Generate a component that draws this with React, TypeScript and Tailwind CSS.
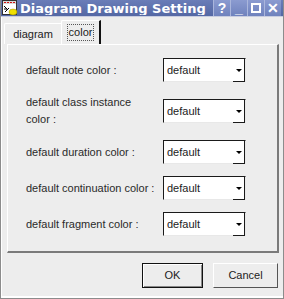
import React from 'react';

const rows = [
  'default note color :',
  'default class instance color :',
  'default duration color :',
  'default continuation color :',
  'default fragment color :',
];

function AppIcon() {
  return (
    <svg width="16" height="16" viewBox="0 0 16 16">
      <rect x="0.5" y="0.5" width="14" height="14" fill="#fff" stroke="#333" />
      <rect x="1" y="1" width="13" height="3" fill="#d8d8d8" />
      <rect x="2" y="2" width="2" height="1" fill="#d01010" />
      <rect x="5" y="2" width="2" height="1" fill="#d01010" />
      <rect x="8" y="2" width="2" height="1" fill="#d01010" />
      <rect x="11" y="2" width="2" height="1" fill="#d01010" />
      <path d="M2 6 L6 10 M2 9 L5 9 M3 12 L7 8" stroke="#000" strokeWidth="1" />
      <ellipse cx="11" cy="12" rx="4" ry="3" fill="#f0e000" stroke="#a09000" strokeWidth="0.5" />
    </svg>
  );
}

function TitleButton({ children }: { children: React.ReactNode }) {
  return (
    <div className="w-[17px] h-[16px] flex items-center justify-center border-l border-[#aab6dc] bg-gradient-to-b from-[#8b9bd0] to-[#6f82bd] text-white font-bold text-[14px] leading-none">
      {children}
    </div>
  );
}

function Combo() {
  return (
    <div className="w-[83px] h-[24px] flex bg-white border-t border-l border-t-[#1a1a1a] border-l-[#1a1a1a] border-r border-b border-r-[#e8e8e8] border-b-[#e8e8e8]">
      <div className="flex-1 flex items-center pl-[3px] text-[11px] text-[#222]">default</div>
      <div className="w-[12px] h-[23px] flex items-center justify-center border-r border-b border-[#1a1a1a]">
        <div className="w-0 h-0 border-l-[3px] border-r-[3px] border-t-[3px] border-l-transparent border-r-transparent border-t-black" />
      </div>
    </div>
  );
}

export default function App() {
  return (
    <div
      className="w-[284px] h-[299px] flex flex-col bg-[#ededed] border-l border-r border-b border-[#8c8c8c] overflow-hidden"
      style={{ fontFamily: '"Liberation Sans", Arial, sans-serif' }}
    >
      {/* title bar */}
      <div className="h-[17px] flex items-center bg-gradient-to-b from-[#6a7db8] to-[#5468a4] border-b border-[#c8cde0]">
        <div className="pl-[1px] pr-[2px] flex items-center">
          <AppIcon />
        </div>
        <div
          className="flex-1 overflow-hidden whitespace-nowrap text-white font-bold text-[13px] leading-none"
          style={{ fontFamily: '"DejaVu Sans", sans-serif' }}
        >
          Diagram Drawing Setting
        </div>
        <div className="flex pr-[2px]">
          <TitleButton>?</TitleButton>
          <TitleButton>_</TitleButton>
          <TitleButton>
            <div className="w-[10px] h-[10px] border-2 border-white" />
          </TitleButton>
          <TitleButton>✕</TitleButton>
        </div>
      </div>

      <div className="flex-1 flex flex-col border-l border-white">
        {/* tabs */}
        <div className="flex items-end ml-[2px] mt-[3px] h-[24px] text-[11px] text-[#222]">
          <div className="h-[21px] w-[57px] flex items-center justify-center border-t border-l border-white rounded-tl-[2px]">
            diagram
          </div>
          <div className="h-[24px] w-[40px] flex items-center justify-center border-t border-l border-white border-r-2 border-r-[#111] rounded-tl-[2px]">
            <span className="px-[1px] py-[1px] border border-dotted border-[#555] leading-[13px]">color</span>
          </div>
        </div>

        {/* panel */}
        <div className="ml-[5px] w-[272px] h-[209px] border-t border-l border-white border-r-2 border-b-2 border-r-[#7a7a7a] border-b-[#7a7a7a] pt-[13px] pl-[18px] flex flex-col gap-3">
          {rows.map((label) => (
            <div key={label} className="flex items-center">
              <div className="w-[137px] text-[11px] leading-[17px] text-[#2a2a2a] pr-[8px]">{label}</div>
              <Combo />
            </div>
          ))}
        </div>

        {/* buttons */}
        <div className="flex justify-end gap-[10px] pr-[5px] mt-[10px]">
          <button className="w-[61px] h-[25px] bg-[#ededed] border border-[#111] text-[11px] text-[#222] shadow-[inset_1px_1px_0_#fff,inset_-1px_-1px_0_#888]">
            OK
          </button>
          <button className="w-[65px] h-[25px] bg-[#ededed] border-t border-l border-white border-r border-b border-r-[#555] border-b-[#555] text-[11px] text-[#222]">
            Cancel
          </button>
        </div>
        <div className="flex-1" />
        <div className="h-[2px] bg-white" />
      </div>
    </div>
  );
}
